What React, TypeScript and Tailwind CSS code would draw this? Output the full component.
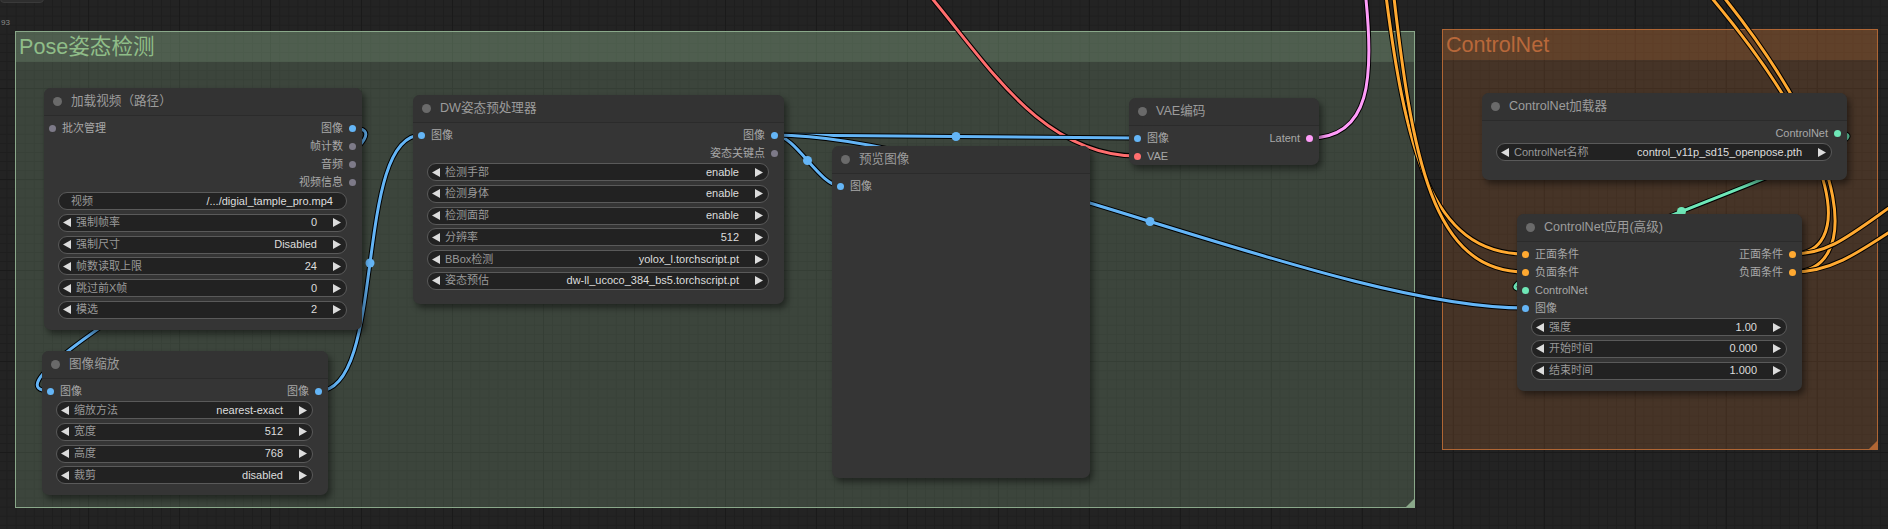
import React from "react";

const FONT = "font-['Liberation_Sans','Noto_Sans_CJK_SC',sans-serif]";

const C = {
  image: "#64b5f6",
  vae: "#ff6e6e",
  latent: "#ff9cf9",
  cond: "#ffa931",
  control: "#6ee7b7",
  none: "#7d7a88",
};

type Slot = { label: string; color: string };
type Widget = { label: string; value: string; arrows?: boolean };
type NodeDef = {
  id: string;
  title: string;
  x: number;
  y: number;
  w: number;
  h: number;
  inputs: Slot[];
  outputs: Slot[];
  widgets: Widget[];
};

const HEADER = 28;
const ROW = 18;
const PAD = 3;

const nodes: NodeDef[] = [
  {
    id: "video",
    title: "加载视频（路径）",
    x: 44,
    y: 88,
    w: 318,
    h: 242,
    inputs: [{ label: "批次管理", color: C.none }],
    outputs: [
      { label: "图像", color: C.image },
      { label: "帧计数", color: C.none },
      { label: "音频", color: C.none },
      { label: "视频信息", color: C.none },
    ],
    widgets: [
      { label: "视频", value: "/.../digial_tample_pro.mp4" },
      { label: "强制帧率", value: "0", arrows: true },
      { label: "强制尺寸", value: "Disabled", arrows: true },
      { label: "帧数读取上限", value: "24", arrows: true },
      { label: "跳过前X帧", value: "0", arrows: true },
      { label: "模选", value: "2", arrows: true },
    ],
  },
  {
    id: "scale",
    title: "图像缩放",
    x: 42,
    y: 351,
    w: 286,
    h: 144,
    inputs: [{ label: "图像", color: C.image }],
    outputs: [{ label: "图像", color: C.image }],
    widgets: [
      { label: "缩放方法", value: "nearest-exact", arrows: true },
      { label: "宽度", value: "512", arrows: true },
      { label: "高度", value: "768", arrows: true },
      { label: "裁剪", value: "disabled", arrows: true },
    ],
  },
  {
    id: "dw",
    title: "DW姿态预处理器",
    x: 413,
    y: 95,
    w: 371,
    h: 209,
    inputs: [{ label: "图像", color: C.image }],
    outputs: [
      { label: "图像", color: C.image },
      { label: "姿态关键点", color: C.none },
    ],
    widgets: [
      { label: "检测手部", value: "enable", arrows: true },
      { label: "检测身体", value: "enable", arrows: true },
      { label: "检测面部", value: "enable", arrows: true },
      { label: "分辨率", value: "512", arrows: true },
      { label: "BBox检测", value: "yolox_l.torchscript.pt", arrows: true },
      { label: "姿态预估", value: "dw-ll_ucoco_384_bs5.torchscript.pt", arrows: true },
    ],
  },
  {
    id: "preview",
    title: "预览图像",
    x: 832,
    y: 146,
    w: 258,
    h: 332,
    inputs: [{ label: "图像", color: C.image }],
    outputs: [],
    widgets: [],
  },
  {
    id: "vae",
    title: "VAE编码",
    x: 1129,
    y: 98,
    w: 190,
    h: 67,
    inputs: [
      { label: "图像", color: C.image },
      { label: "VAE", color: C.vae },
    ],
    outputs: [{ label: "Latent", color: C.latent }],
    widgets: [],
  },
  {
    id: "loader",
    title: "ControlNet加载器",
    x: 1482,
    y: 93,
    w: 365,
    h: 87,
    inputs: [],
    outputs: [{ label: "ControlNet", color: C.control }],
    widgets: [{ label: "ControlNet名称", value: "control_v11p_sd15_openpose.pth", arrows: true }],
  },
  {
    id: "apply",
    title: "ControlNet应用(高级)",
    x: 1517,
    y: 214,
    w: 285,
    h: 177,
    inputs: [
      { label: "正面条件", color: C.cond },
      { label: "负面条件", color: C.cond },
      { label: "ControlNet", color: C.control },
      { label: "图像", color: C.image },
    ],
    outputs: [
      { label: "正面条件", color: C.cond },
      { label: "负面条件", color: C.cond },
    ],
    widgets: [
      { label: "强度", value: "1.00", arrows: true },
      { label: "开始时间", value: "0.000", arrows: true },
      { label: "结束时间", value: "1.000", arrows: true },
    ],
  },
];

const byId: Record<string, NodeDef> = Object.fromEntries(nodes.map((n) => [n.id, n]));

function slotPos(id: string, side: "in" | "out", i: number): [number, number] {
  const n = byId[id];
  const y = n.y + HEADER + PAD + i * ROW + ROW / 2;
  return side === "in" ? [n.x + 8.5, y] : [n.x + n.w - 9.5, y];
}

const links: { from: [string, number]; to: [string, number]; color: string }[] = [
  { from: ["video", 0], to: ["scale", 0], color: C.image },
  { from: ["scale", 0], to: ["dw", 0], color: C.image },
  { from: ["dw", 0], to: ["vae", 0], color: C.image },
  { from: ["dw", 0], to: ["preview", 0], color: C.image },
  { from: ["dw", 0], to: ["apply", 3], color: C.image },
  { from: ["loader", 0], to: ["apply", 2], color: C.control },
];

// links whose other end is off screen
const loose: { d: string; color: string }[] = [
  { d: "M 925 -10 C 985 60, 1040 156, 1137.5 156", color: C.vae },
  { d: "M 1309.5 138 C 1370 138, 1375 80, 1365 -10", color: C.latent },
  { d: "M 1384 -20 C 1405 150, 1430 254, 1525.5 254", color: C.cond },
  { d: "M 1392 -20 C 1412 160, 1432 272, 1525.5 272", color: C.cond },
  { d: "M 1792.5 254 C 1850 254, 1850 160, 1705 -10", color: C.cond },
  { d: "M 1792.5 272 C 1857 272, 1860 165, 1718 -10", color: C.cond },
  { d: "M 1792.5 254 C 1830 254, 1850 235, 1900 200", color: C.cond },
  { d: "M 1792.5 272 C 1830 272, 1855 255, 1900 225", color: C.cond },
];

function bezier(a: [number, number], b: [number, number]) {
  const d = Math.hypot(b[0] - a[0], b[1] - a[1]) * 0.25;
  const p1: [number, number] = [a[0] + d, a[1]];
  const p2: [number, number] = [b[0] - d, b[1]];
  const mid: [number, number] = [
    (a[0] + 3 * p1[0] + 3 * p2[0] + b[0]) / 8,
    (a[1] + 3 * p1[1] + 3 * p2[1] + b[1]) / 8,
  ];
  return {
    d: `M ${a[0]} ${a[1]} C ${p1[0]} ${p1[1]}, ${p2[0]} ${p2[1]}, ${b[0]} ${b[1]}`,
    mid,
  };
}

function Wires() {
  return (
    <svg className="pointer-events-none absolute inset-0 h-full w-full" width={1888} height={529}>
      {loose.map((l, i) => (
        <g key={"l" + i}>
          <path d={l.d} fill="none" stroke="#000" strokeWidth={5} />
          <path d={l.d} fill="none" stroke={l.color} strokeWidth={3} />
        </g>
      ))}
      {links.map((l, i) => {
        const { d, mid } = bezier(slotPos(l.from[0], "out", l.from[1]), slotPos(l.to[0], "in", l.to[1]));
        return (
          <g key={"k" + i}>
            <path d={d} fill="none" stroke="#000" strokeWidth={5} />
            <path d={d} fill="none" stroke={l.color} strokeWidth={3} />
            <circle cx={mid[0]} cy={mid[1]} r={4.5} fill={l.color} />
          </g>
        );
      })}
    </svg>
  );
}

function Arrow({ left, className }: { left?: boolean; className?: string }) {
  return (
    <svg width={8} height={9} viewBox="0 0 8 9" className={className}>
      <polygon points={left ? "8,0 8,9 0,4.5" : "0,0 0,9 8,4.5"} fill="#dcdcdc" />
    </svg>
  );
}

function WidgetRow({ w }: { w: Widget }) {
  return (
    <div className="flex h-[18px] items-center rounded-full border border-[#5a5a5a] bg-[#222] pl-[4px] pr-[5px] text-[11px] leading-none">
      {w.arrows && <Arrow left />}
      <span className={w.arrows ? "ml-[5px] whitespace-nowrap text-[#999]" : "ml-[8px] whitespace-nowrap text-[#999]"}>
        {w.label}
      </span>
      <span className="ml-auto whitespace-nowrap text-[#ddd]">{w.value}</span>
      {w.arrows ? <Arrow className="ml-[16px] shrink-0" /> : <span className="w-[8px] shrink-0" />}
    </div>
  );
}

function Dot({ color }: { color: string }) {
  return <span className="h-[7px] w-[7px] shrink-0 rounded-full" style={{ backgroundColor: color }} />;
}

function Node({ n }: { n: NodeDef }) {
  const rows = Math.max(n.inputs.length, n.outputs.length);
  return (
    <div
      className="absolute flex flex-col rounded-[7px] bg-[#353535] shadow-[3px_4px_6px_rgba(0,0,0,0.45)]"
      style={{ left: n.x, top: n.y, width: n.w, height: n.h }}
    >
      <div className="flex h-[28px] shrink-0 items-center gap-[9px] rounded-t-[7px] border-b border-[#2b2b2b] bg-[#333] pl-[9px]">
        <span className="h-[9px] w-[9px] rounded-full bg-[#6a6a6a]" />
        <span className="whitespace-nowrap text-[12.6px] leading-none text-[#9c9c9c]">{n.title}</span>
      </div>
      <div className="flex flex-col pt-[3px] text-[11px] leading-none text-[#a8a8a8]">
        {Array.from({ length: rows }).map((_, i) => {
          const inp = n.inputs[i];
          const out = n.outputs[i];
          return (
            <div key={i} className="flex h-[18px] items-center justify-between">
              {inp ? (
                <div className="flex items-center gap-[6px] pl-[5px]">
                  <Dot color={inp.color} />
                  <span className="whitespace-nowrap">{inp.label}</span>
                </div>
              ) : (
                <span />
              )}
              {out && (
                <div className="flex items-center gap-[6px] pr-[6px]">
                  <span className="whitespace-nowrap">{out.label}</span>
                  <Dot color={out.color} />
                </div>
              )}
            </div>
          );
        })}
      </div>
      {n.widgets.length > 0 && (
        <div className="mt-[1px] flex flex-col gap-[3.8px] pl-[14px] pr-[15px]">
          {n.widgets.map((w) => (
            <WidgetRow key={w.label} w={w} />
          ))}
        </div>
      )}
    </div>
  );
}

function Group({
  title,
  x,
  y,
  w,
  h,
  green,
}: {
  title: string;
  x: number;
  y: number;
  w: number;
  h: number;
  green?: boolean;
}) {
  return (
    <div
      className={
        green
          ? "absolute flex flex-col border border-[#8aa88a] bg-[rgba(136,170,136,0.25)]"
          : "absolute flex flex-col border border-[#b06634] bg-[rgba(176,102,52,0.25)]"
      }
      style={{ left: x, top: y, width: w, height: h }}
    >
      <div
        className={
          green
            ? "flex h-[30px] items-center bg-[rgba(136,170,136,0.25)] pl-[3px] text-[21.6px] leading-none text-[#8fbd88]"
            : "flex h-[30px] items-center bg-[rgba(176,102,52,0.25)] pl-[3px] text-[21.6px] leading-none text-[#b8683a]"
        }
      >
        {title}
      </div>
      <span
        className={
          green
            ? "absolute bottom-0 right-0 h-0 w-0 border-b-[8px] border-l-[8px] border-b-[#8aa88a] border-l-transparent"
            : "absolute bottom-0 right-0 h-0 w-0 border-b-[8px] border-l-[8px] border-b-[#b06634] border-l-transparent"
        }
      />
    </div>
  );
}

export default function App() {
  return (
    <div
      className={`${FONT} relative h-[529px] w-[1888px] overflow-hidden bg-[#232323] bg-[linear-gradient(to_right,#1a1a1a_1px,transparent_1px),linear-gradient(to_bottom,#1a1a1a_1px,transparent_1px),linear-gradient(to_right,#1e1e1e_1px,transparent_1px),linear-gradient(to_bottom,#1e1e1e_1px,transparent_1px)] [background-position:88px_88px,88px_88px,6.5px_6.5px,6.5px_6.5px] [background-size:91px_91px,91px_91px,9.1px_9.1px,9.1px_9.1px]`}
    >
      <div className="absolute left-0 top-[-20px] h-[23px] w-[44px] rounded-[4px] border border-[#3a3a3a] bg-[#2e2e2e]" />
      <span className="absolute left-[1px] top-[19px] text-[8px] leading-none text-[#8a8a8a]">93</span>

      <Group title="Pose姿态检测" x={15} y={31} w={1400} h={477} green />
      <Group title="ControlNet" x={1442} y={29} w={436} h={421} />

      <Wires />

      {nodes.map((n) => (
        <Node key={n.id} n={n} />
      ))}
    </div>
  );
}
